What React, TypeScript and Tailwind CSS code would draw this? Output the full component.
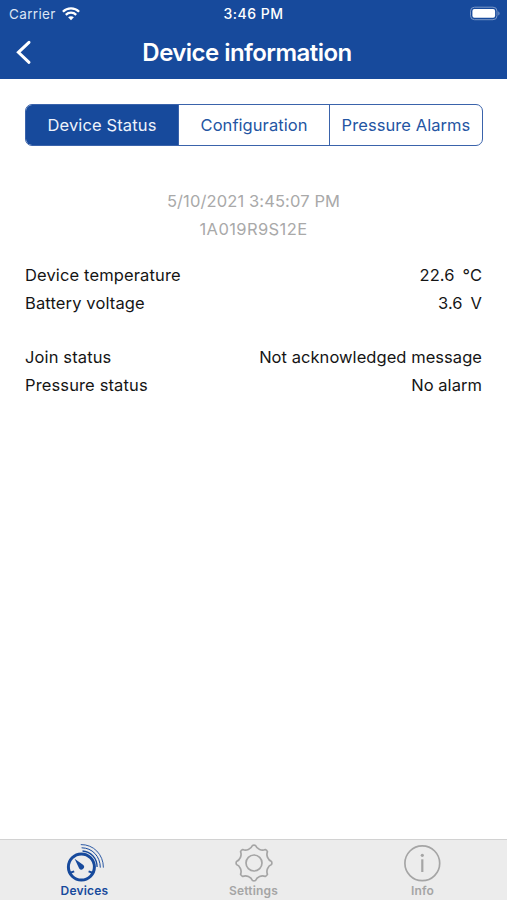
import { useState } from 'react';

const tabs = [
    { label: 'Device Status', width: 'w-[152px]', tracking: 'tracking-[0.13px]' },
    { label: 'Configuration', width: 'w-[151px]', tracking: 'tracking-[0.06px]' },
    { label: 'Pressure Alarms', width: 'flex-1', tracking: 'tracking-[0.07px]' },
];

const groups = [
    [
        { label: 'Device temperature', value: '22.6', unit: '°C' },
        { label: 'Battery voltage', value: '3.6', unit: 'V' },
    ],
    [
        { label: 'Join status', value: 'Not acknowledged message' },
        { label: 'Pressure status', value: 'No alarm' },
    ],
];

function WifiIcon() {
    return (
        <svg width="18" height="14" viewBox="0 0 18 14" fill="none" stroke="white" strokeWidth="2.3">
            <path d="M0.9 4.7C5.4 0.2 12.6 0.2 17.1 4.7" />
            <path d="M3.8 7.8C6.7 5 11.3 5 14.2 7.8" />
            <path d="M9 13.2L6.1 10.3C7.7 8.8 10.3 8.8 11.9 10.3Z" fill="white" stroke="none" />
        </svg>
    );
}

function BatteryIcon() {
    return (
        <svg width="32" height="16" viewBox="0 0 32 16">
            <rect x="1.5" y="1.2" width="26.5" height="12.5" rx="4" fill="none" stroke="#7c98c8" />
            <rect x="3.4" y="3.1" width="22.7" height="8.7" rx="2" fill="white" />
            <path d="M29.3 5.3C31 6.1 31 8.8 29.3 9.6Z" fill="#7c98c8" />
        </svg>
    );
}

function GaugeIcon() {
    return (
        <svg width="40" height="40" viewBox="0 0 40 40" fill="none" stroke="currentColor">
            <circle cx="16.4" cy="24" r="13" strokeWidth="3" />
            <path d="M9.6 15.8L18 21.8A2.7 2.7 0 1 1 14.2 25.6Z" fill="currentColor" stroke="none" />
            <path d="M5.2 29.8L9.2 28.4M27.6 29.8L23.6 28.4" strokeWidth="2" />
            <path d="M17.5 8C25.6 8.4 32 15 32.1 24" strokeWidth="1.3" />
            <path d="M16.6 4.8C27 4.8 35.3 13.2 35.3 24.6" strokeWidth="1" />
            <path d="M15.8 1.6C28.4 1.3 38.4 11.4 38.4 24.6" strokeWidth="0.9" />
        </svg>
    );
}

function gearPath() {
    const point = (angle: number, r: number) => {
        const a = (angle * Math.PI) / 180;
        return `${(20 + r * Math.sin(a)).toFixed(2)} ${(20 - r * Math.cos(a)).toFixed(2)}`;
    };
    let d = `M${point(-5, 17.6)}`;
    for (let i = 0; i < 8; i++) {
        const a = i * 45;
        d += `Q${point(a, 18.2)} ${point(a + 5, 17.6)}`;
        d += `C${point(a + 12, 14.2)} ${point(a + 33, 14.2)} ${point(a + 40, 17.6)}`;
    }
    return d + 'Z';
}

function GearIcon() {
    return (
        <svg width="40" height="40" viewBox="0 0 40 40" fill="none" stroke="currentColor" strokeLinejoin="round">
            <path d={gearPath()} strokeWidth="1.7" />
            <circle cx="20" cy="20" r="8" strokeWidth="1.7" />
        </svg>
    );
}

function InfoIcon() {
    return (
        <svg width="40" height="40" viewBox="0 0 40 40" fill="none" stroke="currentColor">
            <circle cx="19.3" cy="20.3" r="17.4" strokeWidth="1.7" />
            <circle cx="19.3" cy="12.3" r="1.6" fill="currentColor" stroke="none" />
            <path d="M19.3 16.3V29" strokeWidth="2.2" />
        </svg>
    );
}

const navItems = [
    { label: 'Devices', icon: <GaugeIcon /> },
    { label: 'Settings', icon: <GearIcon /> },
    { label: 'Info', icon: <InfoIcon /> },
];

export default function App() {
    const [tab, setTab] = useState(0);
    const [nav, setNav] = useState(0);

    return (
        <div className="w-[507px] h-[900px] overflow-hidden bg-white flex flex-col font-[Inter,sans-serif] text-black">
            <header className="h-[79px] shrink-0 bg-[#174a9c] text-white">
                <div className="h-7 grid grid-cols-3 items-center text-[13.5px] leading-7">
                    <div className="flex items-center gap-1.5 pl-[9px] text-[#dce5f4]">
                        <span className="tracking-[0.35px]">Carrier</span>
                        <WifiIcon />
                    </div>
                    <span className="text-center font-medium text-[14px] tracking-[0.5px]">3:46 PM</span>
                    <div className="flex justify-end pr-1.5">
                        <BatteryIcon />
                    </div>
                </div>
                <div className="h-[49px] grid grid-cols-[60px_1fr_73px] items-center">
                    <button className="pl-[15px]" aria-label="Back">
                        <svg width="18" height="26" viewBox="0 0 18 26" fill="none" stroke="white" strokeWidth="3" strokeLinecap="round">
                            <path d="M14 2.3L3.4 12.3L14 22.3" />
                        </svg>
                    </button>
                    <h1 className="text-center text-[24px] leading-8 font-semibold tracking-[-0.55px]">Device information</h1>
                </div>
            </header>

            <main className="flex-1 px-[25px] pt-[25px]">
                <div className="h-[42px] w-[458px] flex rounded-[7px] border border-[#3a63ab] overflow-hidden">
                    {tabs.map((t, i) => (
                        <button
                            key={t.label}
                            onClick={() => setTab(i)}
                            className={`${t.width} ${t.tracking} text-[16.5px] whitespace-nowrap ${i > 0 ? 'border-l border-[#3a63ab]' : ''} ${
                                tab === i ? 'bg-[#174a9c] text-[#eef3fb]' : 'text-[#2455a3]'
                            }`}
                        >
                            {t.label}
                        </button>
                    ))}
                </div>

                <div className="mt-[41px] text-center text-[16.5px] leading-7 text-[#a9a9a9]">
                    <p className="tracking-[0.12px]">5/10/2021 3:45:07 PM</p>
                    <p className="tracking-[0.4px]">1A019R9S12E</p>
                </div>

                <div className="mt-[18px] flex flex-col gap-[26px] text-[16.5px] leading-7 text-[#151515]">
                    {groups.map((rows, i) => (
                        <div key={i}>
                            {rows.map((row) => (
                                <div key={row.label} className="flex justify-between">
                                    <span className="tracking-[0.13px]">{row.label}</span>
                                    <span className="flex gap-2 tracking-[0.05px]">
                                        {row.value}
                                        {row.unit && <span>{row.unit}</span>}
                                    </span>
                                </div>
                            ))}
                        </div>
                    ))}
                </div>
            </main>

            <nav className="h-[61px] shrink-0 grid grid-cols-3 bg-[#ececec] border-t border-[#d2d2d2]">
                {navItems.map((item, i) => (
                    <button
                        key={item.label}
                        onClick={() => setNav(i)}
                        className={`flex flex-col items-center pt-[3px] text-[12px] leading-4 font-semibold tracking-[0.2px] ${
                            nav === i ? 'text-[#174a9c]' : 'text-[#a5a5a5]'
                        }`}
                    >
                        {item.icon}
                        <span>{item.label}</span>
                    </button>
                ))}
            </nav>
        </div>
    );
}
